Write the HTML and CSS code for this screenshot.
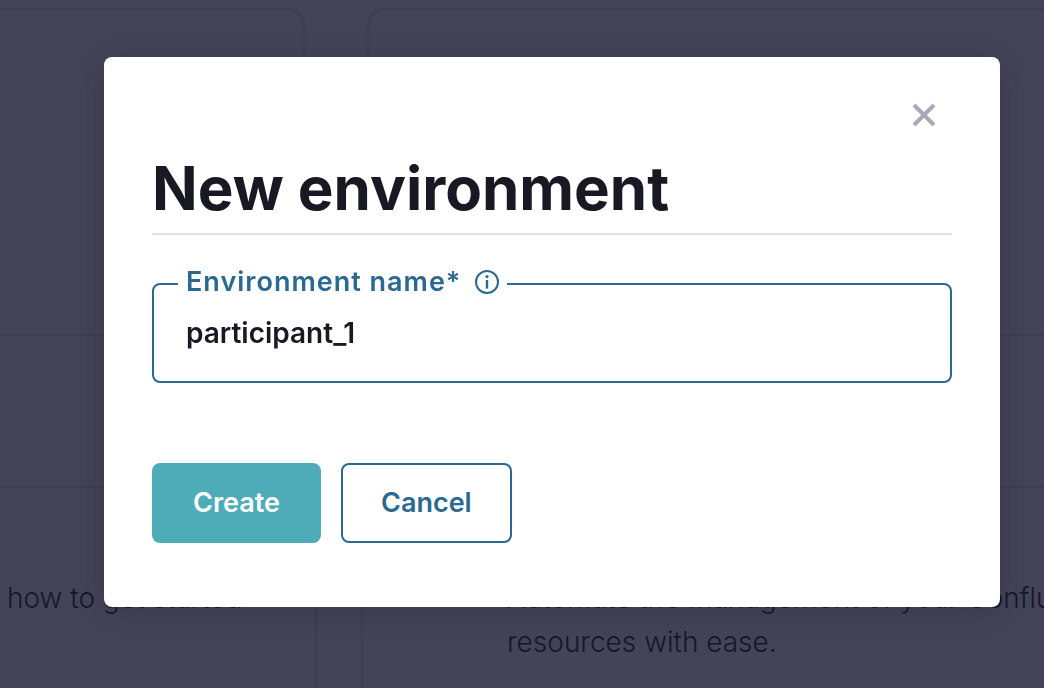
FILE: index.html
```html
<!DOCTYPE html>
<html lang="en">
<head>
<meta charset="utf-8">
<title>New environment</title>
<link rel="stylesheet" href="styles.css">
</head>
<body>
<main class="page" inert>
  <div class="row row-top">
    <section class="card card-top card-left"></section>
    <section class="card card-top card-right"></section>
  </div>
  <div class="row row-bottom">
    <section class="card card-bottom card-left"><p class="card-text">how to get started</p></section>
    <section class="card card-bottom card-right card-indented"><p class="card-text">Automate the management of your Confluent<br>resources with ease.</p></section>
  </div>
</main>
<div class="overlay">
  <div class="dialog" role="dialog" aria-modal="true" aria-labelledby="dialog-title">
    <div class="dialog-top">
      <button class="close" type="button" aria-label="Close">
        <svg class="close-icon" viewBox="0 0 24 24" aria-hidden="true"><path d="M2 2 22 22M22 2 2 22"/></svg>
      </button>
    </div>
    <h1 class="title" id="dialog-title">New environment</h1>
    <form class="form">
      <fieldset class="field">
        <legend class="legend">
          <label class="label" for="env-name">Environment name*</label>
          <button class="info" type="button" aria-label="About environment names">
            <svg class="info-icon" viewBox="0 0 24 24" aria-hidden="true"><circle cx="12" cy="12" r="11"/><circle class="info-dot" cx="12" cy="6.6" r="1.6"/><path class="info-stem" d="M12 10V18.6"/></svg>
          </button>
        </legend>
        <input class="input" id="env-name" type="text" value="participant_1" autocomplete="off" spellcheck="false">
      </fieldset>
      <div class="actions">
        <button class="button button-primary" type="button">Create</button>
        <button class="button button-secondary" type="button">Cancel</button>
      </div>
    </form>
  </div>
</div>
</body>
</html>
```

FILE: styles.css
```css
* {
  box-sizing: border-box;
}

body {
  margin: 0;
  min-height: 100vh;
  background: #444458;
  color: #191924;
  font-family: Inter, "Liberation Sans", sans-serif;
  font-size: 28px;
  overflow: hidden;
}

.page {
  display: flex;
  flex-direction: column;
  gap: 150px;
  height: 100vh;
  padding-top: 8px;
}

.row {
  display: flex;
}

.row-top {
  gap: 62px;
  flex: 0 0 328px;
}

.row-bottom {
  gap: 44px;
  flex: 1;
}

.card {
  border: 2px solid #3e3d52;
  padding-top: 88px;
}

.card-left {
  flex: 0 0 305px;
  border-left: 0;
}

.card-bottom.card-left {
  flex-basis: 317px;
  padding-left: 7px;
}

.card-right {
  flex: 1;
  min-width: 0;
  border-right: 0;
}

.card-indented {
  padding-left: 144px;
}

.card-bottom {
  border-bottom: 0;
}

.card-top.card-left {
  border-top-right-radius: 18px;
}

.card-top.card-right {
  border-top-left-radius: 18px;
}

.card-text {
  margin: 0;
  color: #17172b;
  font-weight: 300;
  line-height: 44px;
  white-space: nowrap;
}

.overlay {
  position: fixed;
  inset: 0;
  padding: 57px 44px 0 104px;
}

.dialog {
  padding: 40px 48px 64px;
  border-radius: 8px;
  background: #fff;
  box-shadow: 0 4px 32px rgba(25, 25, 50, 0.25);
}

.dialog-top {
  display: flex;
  justify-content: flex-end;
  padding-right: 10px;
}

.close {
  display: flex;
  padding: 6px;
  border: 0;
  background: none;
}

.close-icon {
  width: 24px;
  height: 24px;
  fill: none;
  stroke: #a9a8b8;
  stroke-width: 4;
}

.title {
  margin: 0;
  padding: 16px 0 6px;
  border-bottom: 2px solid #dfdfe5;
  font-size: 60px;
  font-weight: 700;
  line-height: 78px;
}

.form {
  padding-top: 28px;
}

.field {
  margin: 0;
  min-width: 0;
  padding: 0 24px 20px;
  border: 2px solid #2b6991;
  border-radius: 8px;
}

.legend {
  display: flex;
  align-items: center;
  gap: 14px;
  padding: 0 8px 4px;
  color: #2b6991;
}

.label {
  font-size: 27px;
  font-weight: 600;
  line-height: 38px;
  letter-spacing: 1px;
}

.info {
  display: flex;
  padding: 0;
  border: 0;
  background: none;
  color: inherit;
}

.info-icon {
  width: 24px;
  height: 24px;
  fill: none;
  stroke: currentColor;
  stroke-width: 2;
}

.info-stem {
  stroke-width: 2.4;
}

.info-dot {
  fill: currentColor;
  stroke: none;
}

.input {
  display: block;
  width: 100%;
  height: 56px;
  padding: 0 8px;
  border: 0;
  outline: 0;
  background: none;
  color: #191924;
  font: inherit;
  font-weight: 600;
}

.actions {
  display: flex;
  gap: 20px;
  padding-top: 80px;
}

.button {
  padding: 18px 38px;
  border: 2px solid #2b6991;
  border-radius: 8px;
  background: #fff;
  color: #2b6991;
  font: inherit;
  font-size: 27px;
  font-weight: 600;
  line-height: 40px;
}

.button-primary {
  padding: 18px 39px;
  border-color: #4eabb8;
  background: #4eabb8;
  color: #fff;
}
```
